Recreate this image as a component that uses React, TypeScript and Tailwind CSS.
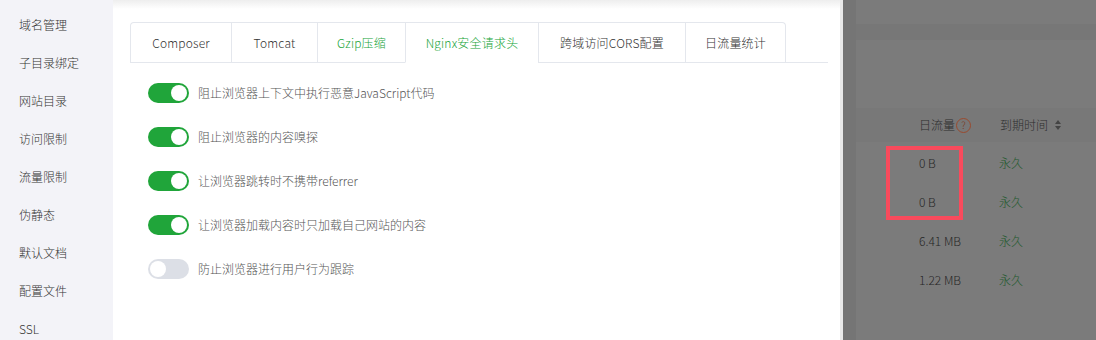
const menu = ['域名管理', '子目录绑定', '网站目录', '访问限制', '流量限制', '伪静态', '默认文档', '配置文件', 'SSL'];

const tabs = [
  { label: 'Composer', w: 'w-[100px]', tone: 'text-[#333]' },
  { label: 'Tomcat', w: 'w-[86px]', tone: 'text-[#333]' },
  { label: 'Gzip压缩', w: 'w-[88px]', tone: 'text-[#20a53a]' },
  { label: 'Nginx安全请求头', w: 'w-[133px]', tone: 'text-[#20a53a]', active: true },
  { label: '跨域访问CORS配置', w: 'w-[147px]', tone: 'text-[#333]' },
  { label: '日流量统计', w: 'w-[100px]', tone: 'text-[#333]' },
];

const options = [
  { label: '阻止浏览器上下文中执行恶意JavaScript代码', on: true },
  { label: '阻止浏览器的内容嗅探', on: true },
  { label: '让浏览器跳转时不携带referrer', on: true },
  { label: '让浏览器加载内容时只加载自己网站的内容', on: true },
  { label: '防止浏览器进行用户行为跟踪', on: false },
];

const rows = ['0 B', '0 B', '6.41 MB', '1.22 MB'];

function Switch({ on }: { on: boolean }) {
  return (
    <span
      className={`flex h-[20px] w-[41px] shrink-0 items-center rounded-full px-[2px] ${
        on ? 'justify-end bg-[#20a53a]' : 'justify-start bg-[#dcdfe6]'
      }`}
    >
      <span className="h-[16px] w-[16px] rounded-full bg-white" />
    </span>
  );
}

export default function App() {
  return (
    <div
      className="relative flex h-[340px] w-[1096px] overflow-hidden bg-white font-light"
      style={{ fontFamily: '"Noto Sans CJK SC", "Noto Sans", sans-serif' }}
    >
      <aside className="w-[113px] shrink-0 bg-[#f3f3f8] pt-[6px]">
        {menu.map((m) => (
          <div key={m} className="flex h-[38px] items-center pl-[19px] text-[12px] text-[#333]">
            {m}
          </div>
        ))}
      </aside>

      <main className="w-[727px] shrink-0 bg-[linear-gradient(to_bottom,#eeeeee,#ffffff_9px)] pl-[17px] pr-[12px] pt-[22px]">
        <div className="flex border-b border-[#e4e7ed]">
          <div className="flex rounded-t-[4px] border border-b-0 border-[#e4e7ed]">
            {tabs.map((t, i) => (
              <div
                key={t.label}
                className={`-mb-px flex h-[40px] items-center justify-center text-[12px] tracking-[0.2px] ${t.w} ${t.tone} ${
                  i > 0 ? 'border-l border-[#e4e7ed]' : ''
                } ${t.active ? 'border-b border-b-white bg-white' : ''}`}
              >
                {t.label}
              </div>
            ))}
          </div>
        </div>

        <div className="flex flex-col gap-[24px] pl-[18px] pt-[20px]">
          {options.map((o) => (
            <div key={o.label} className="flex h-[20px] items-center gap-[9px]">
              <Switch on={o.on} />
              <span className="text-[12px] text-[#555]">{o.label}</span>
            </div>
          ))}
        </div>
      </main>

      <div className="w-[3px] shrink-0 bg-[#e9e9e9]" />

      <section className="flex flex-1 bg-[#7b7b7b]">
        <div className="w-[13px] shrink-0 bg-[#757575]" />
        <div className="flex flex-1 flex-col">
          <div className="mt-[24px] h-[16px] bg-[#777777]" />
          <div className="mt-[68px] flex h-[34px] items-center bg-[#787878] text-[12px] text-[#2e2e2e]">
            <div className="box-content flex w-[80px] items-center gap-[1px] pl-[63px]">
              <span className="whitespace-nowrap">日流量</span>
              <span className="flex h-[15px] w-[15px] items-center justify-center rounded-full border border-[#9a4a2e] text-[10px] leading-none text-[#7a3a22]">
                ?
              </span>
            </div>
            <div className="flex items-center gap-[6px] pl-[1px]">
              <span>到期时间</span>
              <svg width="8" height="12" viewBox="0 0 8 12">
                <path d="M4 1 L7 5 H1 Z" fill="#444" />
                <path d="M4 11 L7 7 H1 Z" fill="#444" />
              </svg>
            </div>
          </div>
          <div className="mt-[1px] flex flex-col">
            {rows.map((r, i) => (
              <div key={i} className="flex h-[39px] items-center text-[12px]">
                <span className="w-[143px] pl-[63px] text-[#262626]">{r}</span>
                <span className="text-[#1f5a2d]">永久</span>
              </div>
            ))}
          </div>
        </div>
      </section>

      <div className="absolute left-[886px] top-[146px] h-[74px] w-[77px] border-[4px] border-[#f94a5c]" />
    </div>
  );
}
